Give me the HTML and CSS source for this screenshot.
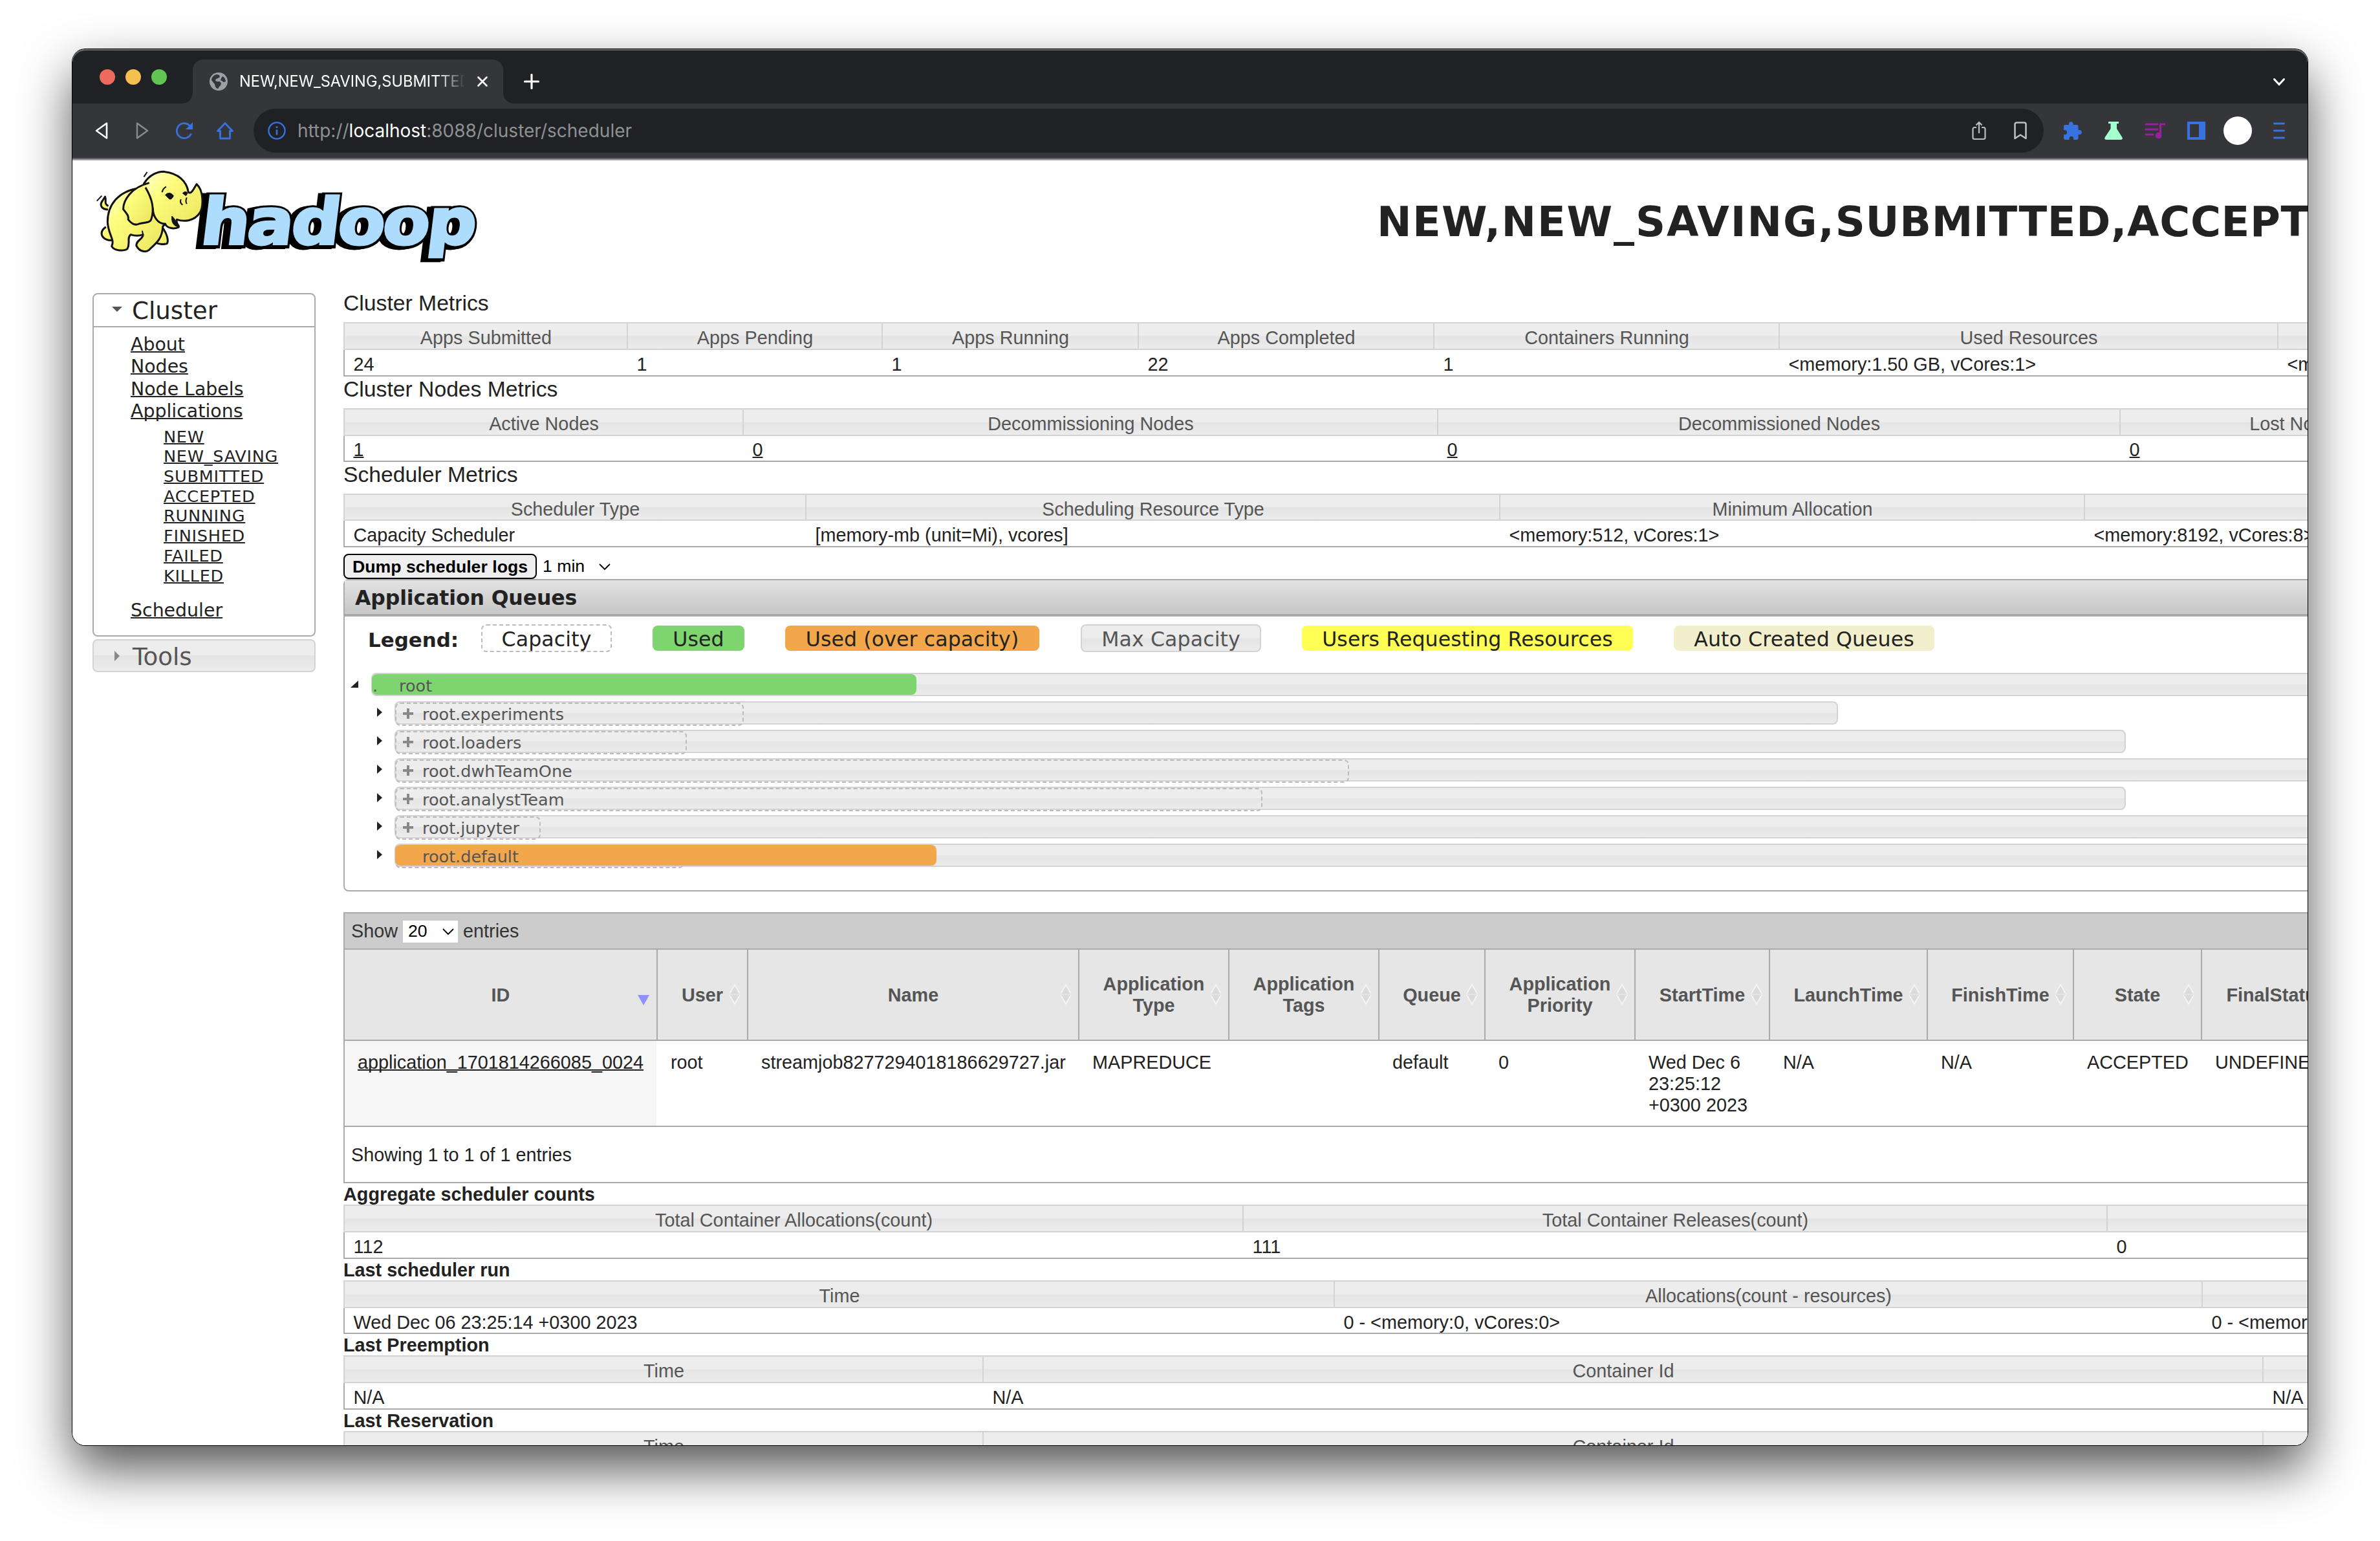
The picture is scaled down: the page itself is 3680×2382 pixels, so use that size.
FILE: index.html
```html
<!DOCTYPE html>
<html lang="en">
<head>
<meta charset="utf-8">
<title>NEW,NEW_SAVING,SUBMITTED,ACCEPTED,RUNNING Applications</title>
<link rel="stylesheet" href="styles.css">
</head>
<body>
<div class="window">
  <div class="tabstrip">
    <div class="lights"><i class="red"></i><i class="amber"></i><i class="green"></i></div>
    <div class="tab">
      <svg class="favicon" viewBox="0 0 28 28"><circle cx="14" cy="14" r="14" fill="#9aa0a6"/><path d="M3 12c0-4 3-8 8-9l4 1 1 3-3 2-3 1-1 3 3 1 4 0 2 3-1 3-3 3v2c-3 0-4-1-5-3l-1-4zM20 6c3 1 5 5 5 8l-3 1-3-2-2-1 1-3z" fill="#35363a"/></svg>
      <span class="tab-title">NEW,NEW_SAVING,SUBMITTED</span>
      <svg class="tab-close" viewBox="0 0 16 16"><path d="M1.5 1.5l13 13M14.5 1.5l-13 13" stroke="#fff" stroke-width="2.6" stroke-linecap="round"/></svg>
    </div>
    <svg class="newtab" viewBox="0 0 24 24"><path d="M12 1.500v21M1.500 12h21" stroke="#fff" stroke-width="3.200" stroke-linecap="round"/></svg>
    <svg class="tabmenu" viewBox="0 0 18 12"><path d="M1.500 1.500L9 9.500l7.500-8" fill="none" stroke="#fff" stroke-width="3" stroke-linecap="round"/></svg>
  </div>
  <div class="toolbar">
    <svg class="ic-back" viewBox="0 0 20 28"><path d="M18 2.500v23L2 14z" fill="none" stroke="#fff" stroke-width="2.600" stroke-linejoin="round"/></svg>
    <svg class="ic-fwd" viewBox="0 0 20 28"><path d="M2 2.500v23L18 14z" fill="none" stroke="#8b8b8d" stroke-width="2.400" stroke-linejoin="round"/></svg>
    <svg class="ic-reload" viewBox="0 0 28 28"><path d="M24.500 18.500A11.500 11.500 0 1 1 21.500 5.500L24 8" fill="none" stroke="#3871e0" stroke-width="2.800"/><path d="M27 1v11H16z" fill="#3871e0"/></svg>
    <svg class="ic-home" viewBox="0 0 28 28"><path d="M14 2.500L2.500 14.500H6.500V26h15V14.500h4z" fill="none" stroke="#3871e0" stroke-width="2.800" stroke-linejoin="round"/></svg>
    <div class="omnibox">
      <svg class="ic-info" viewBox="0 0 28 28"><circle cx="14" cy="14" r="12.600" fill="none" stroke="#3871e0" stroke-width="2.400"/><path d="M14 12.500v8" stroke="#3871e0" stroke-width="2.600"/><circle cx="14" cy="8.500" r="1.600" fill="#3871e0"/></svg>
      <span class="url">http://<b>localhost</b>:8088/cluster/scheduler</span>
      <svg class="ic-share" viewBox="0 0 22 30"><path d="M7 10H4a2.500 2.500 0 0 0-2.500 2.500v13A2.500 2.500 0 0 0 4 28h14a2.500 2.500 0 0 0 2.500-2.500v-13A2.500 2.500 0 0 0 18 10h-3M11 19V2.500M6.500 6.500L11 2l4.500 4.500" fill="none" stroke="#bdbdbd" stroke-width="2.200"/></svg>
      <svg class="ic-mark" viewBox="0 0 20 28"><path d="M1.500 26V4A2.500 2.500 0 0 1 4 1.500h12A2.500 2.500 0 0 1 18.500 4v22L10 20.500z" fill="none" stroke="#bdbdbd" stroke-width="2.600" stroke-linejoin="round"/></svg>
    </div>
    <svg class="ic-puzzle" viewBox="0 0 30 30"><path d="M9 6V4.500a3.300 3.300 0 0 1 6.600 0V6H21a2.500 2.500 0 0 1 2.500 2.500v5.500h1.700a3.500 3.500 0 0 1 0 7h-1.700v5.500A2.500 2.500 0 0 1 21 29h-5v-2a3.200 3.200 0 0 0-6.400 0v2H3.500A2.500 2.500 0 0 1 1 26.500V21h1.500a3.500 3.500 0 0 0 0-7H1V8.500A2.500 2.500 0 0 1 3.500 6z" fill="#3871e0"/></svg>
    <svg class="ic-flask" viewBox="0 0 28 28"><path d="M6 0h16v3h-3v8l8.500 13.500c1 2-.5 3.500-2.500 3.500H3c-2 0-3.500-1.500-2.500-3.500L9.500 11V3H6z" fill="#a3ffcb"/></svg>
    <svg class="ic-music" viewBox="0 0 34 28"><path d="M3 4h18M3 12h18M3 20h11" stroke="#9a1fa3" stroke-width="3" stroke-linecap="round"/><path d="M25.500 22V4H33" fill="none" stroke="#9a1fa3" stroke-width="3"/><circle cx="22.500" cy="21.500" r="4.800" fill="#9a1fa3"/></svg>
    <svg class="ic-panel" viewBox="0 0 28 28"><path d="M0 0h28v28H0zM4 4v20h14V4z" fill="#3871e0" fill-rule="evenodd"/></svg>
    <i class="avatar"></i>
    <svg class="ic-menu" viewBox="0 0 18 28"><path d="M1.500 3h15M1.500 14h15M1.500 25h15" stroke="#3871e0" stroke-width="2.800" stroke-linecap="round"/></svg>
  </div>

  <div class="viewport">
    <div class="masthead">
      <svg class="logo" viewBox="0 0 620 160">
        <defs><linearGradient id="hide" x1="0" y1="0" x2="1" y2="1"><stop offset="0" stop-color="#ffffd0"/><stop offset=".35" stop-color="#fdfc7c"/><stop offset="1" stop-color="#e9e45c"/></linearGradient></defs>
        <g class="wordmark" transform="translate(0 122) skewX(-7)">
          <text x="161" y="1" textLength="422" lengthAdjust="spacingAndGlyphs" stroke="#000" stroke-width="12">hadoop</text>
          <text x="167" y="0" textLength="422" lengthAdjust="spacingAndGlyphs" stroke="#000" stroke-width="12">hadoop</text>
          <text x="168" y="-1" textLength="422" lengthAdjust="spacingAndGlyphs" fill="#aedcfd" stroke="#aedcfd" stroke-width="4">hadoop</text>
        </g>
        <g class="elephant" transform="translate(-40 -196) scale(.63776 .33333)">
          <path d="M105 792C88 790 84 770 92 750L98 732C102 750 94 765 106 775"/>
          <path d="M100 872C86 890 86 915 100 930C112 940 124 930 126 918"/>
          <path d="M232 865C250 900 252 940 248 950C238 955 226 952 222 945"/>
          <path d="M182 692C130 705 104 770 104 850C106 910 122 930 114 962C120 985 145 985 152 974C160 945 150 925 160 908Q175 918 190 908C190 930 172 935 174 960C182 990 198 990 204 980C215 955 236 940 238 870C250 850 250 800 240 740Z"/>
          <path d="M192 672C205 630 225 616 240 616C275 622 296 660 300 712C308 722 314 690 320 674C338 706 336 780 328 806C314 846 290 850 272 838C268 860 280 865 276 874C262 886 246 874 244 858C225 860 214 820 214 790Z"/>
          <path d="M205 668C160 690 142 750 142 790C150 810 156 820 154 838C164 862 172 866 180 858C200 850 208 852 210 836C218 790 212 740 196 690"/>
          <path d="M260 822C275 850 270 862 276 872C264 870 258 850 260 822Z" fill="#111"/>
          <path d="M244 724q10-20 20 4q-6 24-12 12zM286 716q8-14 12 0l-4 12z" fill="#111"/>
          <path d="M236 712q2-18 10-26M286 770q-8-10-4-26M296 766q-4-14 0-30M188 890l2 18M90 728l-12 24M200 618l-8 22" fill="none"/>
        </g>
      </svg>
      <h1>NEW,<span class="wide">NEW_SAVING,</span><span class="tight">SUBMITTED,ACCEPTED,RUNNING Applications</span></h1>
    </div>

    <div class="columns">
      <div class="sidebar">
        <div class="menu open">
          <h3><svg viewBox="0 0 16 10"><path d="M0 1h16L8 9z" fill="#555"/></svg>Cluster</h3>
          <ul class="links">
            <li><a>About</a></li><li><a>Nodes</a></li><li><a>Node Labels</a></li><li><a>Applications</a>
              <ul class="states"><li><a>NEW</a></li><li><a>NEW_SAVING</a></li><li><a>SUBMITTED</a></li><li><a>ACCEPTED</a></li><li><a>RUNNING</a></li><li><a>FINISHED</a></li><li><a>FAILED</a></li><li><a>KILLED</a></li></ul>
            </li>
            <li><a>Scheduler</a></li>
          </ul>
        </div>
        <div class="menu closed">
          <h3><svg viewBox="0 0 10 16"><path d="M1 0v16l8-8z" fill="#888"/></svg>Tools</h3>
        </div>
      </div>

      <div class="main">
        <h2>Cluster Metrics</h2>
        <div class="grid t1">
          <b>Apps Submitted</b><b>Apps Pending</b><b>Apps Running</b><b>Apps Completed</b><b>Containers Running</b><b>Used Resources</b><b></b>
          <span>24</span><span>1</span><span>1</span><span>22</span><span>1</span><span>&lt;memory:1.50 GB, vCores:1&gt;</span><span>&lt;memory:8 GB, vCores:8&gt;</span>
        </div>
        <h2>Cluster Nodes Metrics</h2>
        <div class="grid t2">
          <b>Active Nodes</b><b>Decommissioning Nodes</b><b>Decommissioned Nodes</b><b>Lost Nodes</b>
          <span><a>1</a></span><span><a>0</a></span><span><a>0</a></span><span><a>0</a></span>
        </div>
        <h2>Scheduler Metrics</h2>
        <div class="grid t3">
          <b>Scheduler Type</b><b>Scheduling Resource Type</b><b>Minimum Allocation</b><b></b>
          <span>Capacity Scheduler</span><span>[memory-mb (unit=Mi), vcores]</span><span>&lt;memory:512, vCores:1&gt;</span><span>&lt;memory:8192, vCores:8&gt;</span>
        </div>
        <div class="dump">
          <button>Dump scheduler logs</button><span class="period">1 min</span>
          <svg viewBox="0 0 18 10"><path d="M1 1l8 8 8-8" fill="none" stroke="#000" stroke-width="1.800"/></svg>
        </div>

        <div class="queues">
          <h4>Application Queues</h4>
          <div class="legend">
            <strong>Legend:</strong>
            <span class="lg cap">Capacity</span><span class="lg used">Used</span><span class="lg over">Used (over capacity)</span><span class="lg max">Max Capacity</span><span class="lg users">Users Requesting Resources</span><span class="lg auto">Auto Created Queues</span>
          </div>
          <div class="q root"><svg class="tw" viewBox="0 0 12 11"><path d="M12 0v11H0z" fill="#222"/></svg>
            <div class="bar"><i class="fill used" style="width:842px"></i><em class="dot">.</em><em>root</em></div></div>
          <div class="q"><svg class="tw" viewBox="0 0 8 14"><path d="M0 0v14l8-7z" fill="#222"/></svg>
            <div class="bar" style="width:2232px"><i class="cap" style="width:539px"></i><em class="plus"></em><em>root.experiments</em></div></div>
          <div class="q"><svg class="tw" viewBox="0 0 8 14"><path d="M0 0v14l8-7z" fill="#222"/></svg>
            <div class="bar" style="width:2677px"><i class="cap" style="width:451px"></i><em class="plus"></em><em>root.loaders</em></div></div>
          <div class="q"><svg class="tw" viewBox="0 0 8 14"><path d="M0 0v14l8-7z" fill="#222"/></svg>
            <div class="bar"><i class="cap" style="width:1475px"></i><em class="plus"></em><em>root.dwhTeamOne</em></div></div>
          <div class="q"><svg class="tw" viewBox="0 0 8 14"><path d="M0 0v14l8-7z" fill="#222"/></svg>
            <div class="bar" style="width:2677px"><i class="cap" style="width:1341px"></i><em class="plus"></em><em>root.analystTeam</em></div></div>
          <div class="q"><svg class="tw" viewBox="0 0 8 14"><path d="M0 0v14l8-7z" fill="#222"/></svg>
            <div class="bar"><i class="cap" style="width:225px"></i><em class="plus"></em><em>root.jupyter</em></div></div>
          <div class="q"><svg class="tw" viewBox="0 0 8 14"><path d="M0 0v14l8-7z" fill="#222"/></svg>
            <div class="bar"><i class="cap" style="width:447px"></i><i class="fill over" style="width:837px"></i><em class="leaf">root.default</em></div></div>
        </div>

        <div class="apps">
          <div class="length">Show <span class="select">20<svg viewBox="0 0 18 10"><path d="M1 1l8 8 8-8" fill="none" stroke="#000" stroke-width="1.800"/></svg></span> entries</div>
          <div class="row head">
            <b class="sorted">ID</b><b>User</b><b>Name</b><b>Application<br>Type</b><b>Application<br>Tags</b><b>Queue</b><b>Application<br>Priority</b><b>StartTime</b><b>LaunchTime</b><b>FinishTime</b><b>State</b><b>FinalStatus</b><b></b>
          </div>
          <div class="row data">
            <span class="sorted"><a>application_1701814266085_0024</a></span><span>root</span><span>streamjob8277294018186629727.jar</span><span>MAPREDUCE</span><span></span><span>default</span><span>0</span><span>Wed Dec 6<br>23:25:12<br>+0300 2023</span><span>N/A</span><span>N/A</span><span>ACCEPTED</span><span>UNDEFINED</span><span></span>
          </div>
          <div class="info">Showing 1 to 1 of 1 entries</div>
        </div>

        <h5>Aggregate scheduler counts</h5>
        <div class="grid t4">
          <b>Total Container Allocations(count)</b><b>Total Container Releases(count)</b><b></b>
          <span>112</span><span>111</span><span>0</span>
        </div>
        <h5>Last scheduler run</h5>
        <div class="grid t5">
          <b>Time</b><b>Allocations(count - resources)</b><b></b>
          <span>Wed Dec 06 23:25:14 +0300 2023</span><span>0 - &lt;memory:0, vCores:0&gt;</span><span>0 - &lt;memory:0, vCores:0&gt;</span>
        </div>
        <h5>Last Preemption</h5>
        <div class="grid t6">
          <b>Time</b><b>Container Id</b><b></b>
          <span>N/A</span><span>N/A</span><span>N/A</span>
        </div>
        <h5>Last Reservation</h5>
        <div class="grid t6">
          <b>Time</b><b>Container Id</b><b></b>
        </div>
      </div>
    </div>
  </div>
</div>
</body>
</html>
```
FILE: styles.css
```css
* { box-sizing: border-box; }
html, body { margin: 0; height: 2382px; background: #fff; overflow: hidden; }
body { display: flex; align-items: flex-start; font-family: "Liberation Sans", Arial, sans-serif; font-size: 28.8px; color: #222; }
h1, h2, h3, h4, h5, ul { margin: 0; padding: 0; font-weight: 400; }
ul { list-style: none; }
i, em { font-style: normal; }
svg { display: block; flex: none; }
a { text-decoration: underline; text-decoration-thickness: 2px; text-decoration-skip-ink: none; }

.window {
  width: 3456px; height: 2158px; margin: 76px 0 0 112px; flex: none;
  display: flex; flex-direction: column; overflow: hidden; position: relative;
  border-radius: 20px; background: #fff;
  box-shadow: 0 0 0 1px #000, 0 36px 80px rgba(0, 0, 0, .68);
}

/* tab strip */
.tabstrip { height: 84px; flex: none; display: flex; align-items: flex-start; background: #202124; box-shadow: inset 0 2px 0 #6c6d6f; border-radius: 20px 20px 0 0; }
.lights { display: flex; gap: 16px; padding: 31px 0 0 42px; }
.lights i { width: 24px; height: 24px; border-radius: 50%; }
.red { background: #ed6a5e; }
.amber { background: #f4bf4f; }
.green { background: #61c554; }
.tab { position: relative; width: 480px; height: 68px; margin: 16px 0 0 40px; padding: 0 24px 0 26px; display: flex; align-items: center; border-radius: 16px 16px 0 0; background: #35363a; }
.tab::before, .tab::after { content: ""; position: absolute; bottom: 0; width: 16px; height: 16px; }
.tab::before { left: -16px; background: radial-gradient(circle at 0 0, transparent 15.500px, #35363a 16px); }
.tab::after { right: -16px; background: radial-gradient(circle at 100% 0, transparent 15.500px, #35363a 16px); }
.favicon { width: 28px; height: 28px; }
.tab-title { width: 349px; margin-left: 18px; overflow: hidden; white-space: nowrap; font: 23.600px/34px Inter, sans-serif; color: #fff; -webkit-mask-image: linear-gradient(90deg, #000 88%, transparent); mask-image: linear-gradient(90deg, #000 88%, transparent); }
.tab-close { width: 16px; height: 16px; margin-left: 19px; }
.newtab { width: 24px; height: 24px; margin: 38px 0 0 32px; }
.tabmenu { width: 18px; height: 12px; margin: 45px 35px 0 auto; }

/* toolbar */
.toolbar { height: 88px; flex: none; display: flex; align-items: center; background: #35363a; border-top: 0; border-bottom: 2px solid #a5a5a7; box-shadow: inset 0 -2px 0 #5f6063; padding-bottom: 2px; }
.ic-back { width: 20px; height: 28px; margin-left: 35px; }
.ic-fwd { width: 20px; height: 28px; margin-left: 43px; }
.ic-reload { width: 28px; height: 28px; margin-left: 41px; }
.ic-home { width: 28px; height: 28px; margin-left: 35px; }
.omnibox { width: 2768px; height: 68px; margin-left: 30px; padding: 0 26px 0 22px; display: flex; align-items: center; border-radius: 34px; background: #202124; }
.ic-info { width: 28px; height: 28px; }
.url { margin-left: 18px; flex: 1; font: 28px/40px Inter, sans-serif; color: #8f9092; white-space: nowrap; }
.url b { font-weight: 400; color: #fff; }
.ic-share { width: 22px; height: 30px; margin-right: 43px; }
.ic-mark { width: 20px; height: 28px; }
.ic-puzzle { width: 30px; height: 30px; margin-left: 30px; }
.ic-flask { width: 28px; height: 28px; margin-left: 34px; }
.ic-music { width: 34px; height: 28px; margin-left: 33px; }
.ic-panel { width: 28px; height: 28px; margin-left: 33px; }
.avatar { width: 44px; height: 44px; margin-left: 28px; border-radius: 50%; background: #fff; }
.ic-menu { width: 18px; height: 28px; margin-left: 33px; }

/* page */
.viewport { flex: 1; min-height: 0; overflow: hidden; background: #fff; }
.masthead { height: 201px; display: flex; align-items: flex-start; }
.logo { width: 620px; height: 160px; margin: 8px 0 0 28px; overflow: visible; }
.wordmark { font-family: "DejaVu Sans", Verdana, sans-serif; font-weight: 700; font-size: 98px; letter-spacing: -3px; stroke-linejoin: miter; }
.elephant path { fill: url(#hide); stroke: #111; stroke-width: 3px; stroke-linejoin: round; vector-effect: non-scaling-stroke; }
.elephant path[fill="#111"] { fill: #111; stroke-width: 1px; }
.elephant path[fill="none"] { fill: none; stroke-width: 2px; }
.masthead h1 { margin: 55px 0 0 1369px; font: 700 64px/80px "DejaVu Sans", Verdana, sans-serif; letter-spacing: 1.350px; white-space: nowrap; color: #222; }
.masthead h1 .wide { letter-spacing: 1.950px; }
.masthead h1 .tight { letter-spacing: .700px; }
.columns { display: flex; align-items: flex-start; padding-left: 31px; }

/* sidebar */
.sidebar { width: 345px; flex: none; margin-top: 4px; font-family: "DejaVu Sans", Verdana, sans-serif; }
.menu { border: 2px solid #aaa; border-radius: 8px; }
.menu h3 { display: flex; align-items: center; font-size: 37.200px; line-height: 48px; }
.menu.open { height: 531px; }
.menu.open h3 { height: 51px; padding: 1px 0 0 28px; border-bottom: 2px solid #aaa; color: #222; }
.menu.open svg { width: 16px; height: 10px; margin: -4px 15px 0 0; }
.menu.closed { height: 51px; margin-top: 4px; border-color: #d3d3d3; background: linear-gradient(#ededed 48%, #e4e4e4 50%, #ececec); color: #555; }
.menu.closed h3 { height: 47px; padding: 2px 0 0 31px; }
.menu.closed svg { width: 10px; height: 16px; margin: -2px 19px 0 0; }
.links { padding: 10px 0 0 57px; font-size: 28.400px; line-height: 34.400px; }
.states { padding: 6px 0 22px 51px; font-size: 25.600px; letter-spacing: .7px; line-height: 30.700px; }

/* metric tables */
.main { flex: none; width: 3600px; margin-left: 43px; }
.main h2 { height: 49px; font-size: 33.700px; line-height: 38px; }
.main h5 { height: 33px; font-size: 28.800px; line-height: 34px; font-weight: 700; }
.grid { display: grid; width: max-content; grid-template-rows: 43px 41px; border-left: 2px solid #aaa; border-bottom: 2px solid #aaa; }
.grid b, .grid span { white-space: nowrap; line-height: 33px; padding-top: 6px; }
.grid b { padding-right: 1px; font-weight: 400; text-align: center; color: #555; margin-left: -2px; border: solid #d3d3d3; border-width: 2px 0 2px 2px; background: linear-gradient(#ededed 48%, #e4e4e4 52%, #ececec); }
.grid span { padding-left: 13.500px; }
.t1 { grid-template-columns: 438px 394px 396px 457px 534px 771px 500px; height: 84px; }
.t2 { grid-template-columns: 617px 1074px 1055px 545px; height: 83px; }
.grid.t2 span { padding-top: 5px; }
.t3 { grid-template-columns: 714px 1073px 904px 1300px; grid-template-rows: 42px 39px; height: 83px; }
.t4 { grid-template-columns: 1390px 1336px 1200px; height: 84px; }
.t5 { grid-template-columns: 1531px 1342px 1300px; height: 83px; }
.t6 { grid-template-columns: 988px 1979px 1000px; height: 84px; }

.dump { height: 49px; padding-top: 10px; display: flex; align-items: flex-start; font-size: 26.670px; color: #000; }
.dump button { width: 299px; height: 39px; padding: 1px 0 0; border: 2px solid #000; border-radius: 8px; background: #efefef; font: 700 26.670px/34px "Liberation Sans", Arial, sans-serif; color: #000; }
.period { margin-left: 9px; line-height: 39px; }
.dump svg { width: 18px; height: 10px; margin: 15px 0 0 22px; }

/* queues */
.queues { width: 3500px; height: 483px; border: 2px solid #aaa; border-radius: 8px; font-family: "DejaVu Sans", Verdana, sans-serif; }
.queues h4 { height: 56px; padding-left: 16px; font-size: 31.500px; line-height: 55px; font-weight: 700; letter-spacing: -.1px; border-bottom: 4px solid #aaa; background: linear-gradient(#e1e1e1, #cacaca 90%); }
.legend { height: 87px; padding: 12px 0 0 36px; display: flex; font-size: 31.600px; }
.legend strong { width: 175px; line-height: 48px; font-size: 30.900px; }
.lg { height: 39px; margin: 2px 63px 0 0; border-radius: 8px; line-height: 43px; text-align: center; white-space: nowrap; letter-spacing: .1px; }
.lg.cap { width: 202px; height: 43px; margin-top: 0; border: 2px dashed #bbb; }
.lg.used { width: 142px; }
.lg.over { width: 393px; margin-right: 64px; }
.lg.max { width: 279px; height: 43px; margin-top: 0; border: 2px solid #d3d3d3; background: linear-gradient(#ededed 48%, #e4e4e4 52%, #ececec); color: #555; }
.lg.users { width: 512px; background: #ffff54; }
.lg.auto { width: 403px; background: #f2efcd; }
.used { background: #7ed56f; }
.over { background: #f2a74b; }
.q { display: flex; height: 36px; margin-bottom: 8px; padding-left: 50px; }
.q .tw { width: 8px; height: 14px; margin: 10px 19px 0 0; }
.q.root { padding-left: 9px; }
.q.root .tw { width: 12px; height: 11px; margin: 12px 20px 0 0; }
.bar { position: relative; width: 3300px; height: 36px; flex: none; display: flex; align-items: center; border: 2px solid #d3d3d3; border-radius: 8px; background: linear-gradient(#ededed 48%, #e4e4e4 52%, #ececec); font-size: 25.500px; line-height: 32px; color: #555; }
.bar .cap, .bar .fill { position: absolute; left: -1px; top: 0; border-radius: 8px; }
.bar .cap { height: 36px; border: 2px dashed #bbb; }
.bar .fill { height: 32px; }
.bar em { position: relative; top: 2px; white-space: nowrap; }
.bar .dot { width: 41px; }
.bar .leaf { margin-left: 41px; }
.bar .plus { top: 1px; width: 16px; height: 16px; margin: 0 14px 0 11px; background: linear-gradient(#888, #888) 50% 50% / 16px 4px no-repeat, linear-gradient(#888, #888) 50% 50% / 4px 16px no-repeat; }

/* applications table */
.apps { width: 3500px; margin-top: 32px; border: 2px solid #aaa; height: 419px; }
.length { height: 54px; padding: 1px 0 0 10px; display: flex; align-items: center; background: #ccc; color: #333; white-space: pre; }
.select { display: flex; align-items: center; width: 85px; height: 34px; padding-left: 8px; background: #fff; color: #000; font-size: 26.670px; }
.select svg { width: 18px; height: 10px; margin-left: 23px; }
.row { display: grid; grid-template-columns: 482px 140px 512px 232px 232px 164px 232px 208px 244px 226px 198px 232px 393px; border-top: 2px solid #aaa; }
.row.head { height: 141px; }
.row.head b { position: relative; display: flex; align-items: center; justify-content: center; text-align: center; line-height: 33px; padding-top: 1px; background: #e6e6e6; color: #555; border-left: 2px solid #aaa; }
.row.head b:first-child { border-left: 0; }
.row.head b::before, .row.head b::after { content: ""; position: absolute; right: 10px; width: 18px; height: 16px; background: #dbdbdb; box-sizing: border-box; }
.row.head b::before { top: 52px; clip-path: polygon(50% 0, 100% 100%, 0 100%); background: conic-gradient(from 150deg at 50% 4px, #dbdbdb 60deg, #f4f4f4 0); }
.row.head b::after { top: 70px; clip-path: polygon(0 0, 100% 0, 50% 100%); background: conic-gradient(from -30deg at 50% 12px, #dbdbdb 60deg, #f4f4f4 0); }
.row.head b.sorted::before { display: none; }
.row.head b.sorted::after { background: #9090ff; right: 11px; }
.row.data { height: 135px; border-bottom: 2px solid #aaa; line-height: 33.200px; white-space: nowrap; }
.row.data span { padding: 17px 0 0 22px; }
.row.data .sorted { padding-left: 20px; background: #f6f6f6; }
.info { padding: 26px 0 0 10px; line-height: 34px; }
```
